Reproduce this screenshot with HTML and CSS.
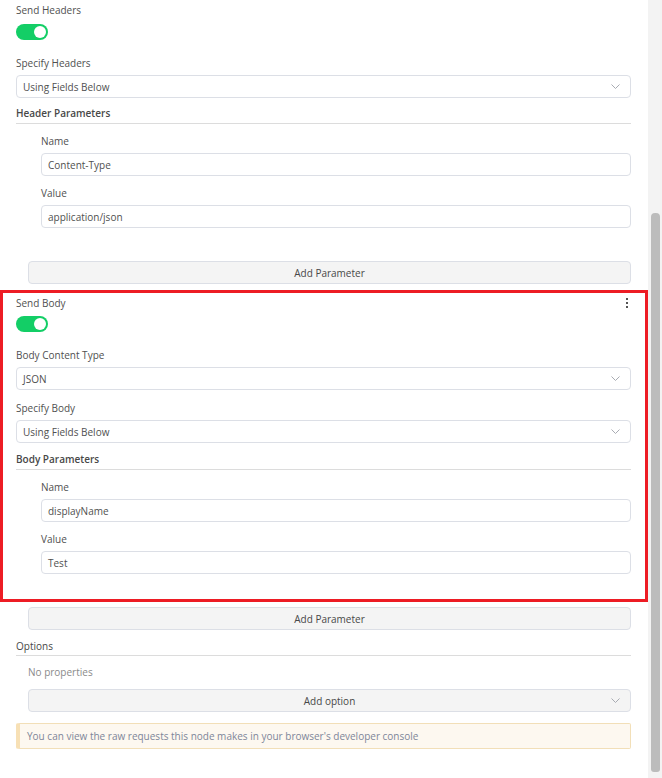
FILE: index.html
```html
<!DOCTYPE html>
<html lang="en">
<head>
  <meta charset="UTF-8">
  <meta name="viewport" content="width=device-width, initial-scale=1.0">
  <title>HTTP Request</title>
  <link rel="stylesheet" href="styles.css">
</head>
<body>
  <div class="window">
    <div class="panel">
      <div class="param param-switch">
        <div class="label">Send Headers</div>
        <div class="switch"><span class="knob"></span></div>
      </div>
      <div class="param">
        <div class="label">Specify Headers</div>
        <div class="select">
          <span>Using Fields Below</span>
          <svg class="chevron" width="9" height="6" viewBox="0 0 9 6"><polyline points="0.5,0.5 4.5,4.5 8.5,0.5" fill="none" stroke="#a8abb2" stroke-width="1"/></svg>
        </div>
      </div>
      <div class="collection">
        <div class="collection-title">Header Parameters</div>
        <div class="collection-items">
          <div class="param">
            <div class="label">Name</div>
            <div class="input">Content-Type</div>
          </div>
          <div class="param">
            <div class="label">Value</div>
            <div class="input">application/json</div>
          </div>
        </div>
      </div>
      <div class="add-button">Add Parameter</div>

      <div class="highlight">
        <div class="param param-switch">
          <div class="label-row">
            <div class="label">Send Body</div>
            <svg class="dots" width="4" height="10" viewBox="0 0 4 10"><rect x="1" y="0" width="2" height="2" fill="#555"/><rect x="1" y="4" width="2" height="2" fill="#555"/><rect x="1" y="8" width="2" height="2" fill="#555"/></svg>
          </div>
          <div class="switch"><span class="knob"></span></div>
        </div>
        <div class="param">
          <div class="label">Body Content Type</div>
          <div class="select">
            <span>JSON</span>
            <svg class="chevron" width="9" height="6" viewBox="0 0 9 6"><polyline points="0.5,0.5 4.5,4.5 8.5,0.5" fill="none" stroke="#a8abb2" stroke-width="1"/></svg>
          </div>
        </div>
        <div class="param">
          <div class="label">Specify Body</div>
          <div class="select">
            <span>Using Fields Below</span>
            <svg class="chevron" width="9" height="6" viewBox="0 0 9 6"><polyline points="0.5,0.5 4.5,4.5 8.5,0.5" fill="none" stroke="#a8abb2" stroke-width="1"/></svg>
          </div>
        </div>
        <div class="collection">
          <div class="collection-title">Body Parameters</div>
          <div class="collection-items">
            <div class="param">
              <div class="label">Name</div>
              <div class="input">displayName</div>
            </div>
            <div class="param">
              <div class="label">Value</div>
              <div class="input">Test</div>
            </div>
          </div>
        </div>
      </div>
      <div class="add-button add-after">Add Parameter</div>

      <div class="collection options">
        <div class="collection-title">Options</div>
        <div class="no-props">No properties</div>
        <div class="add-button add-option">
          <span>Add option</span>
          <svg class="chevron" width="9" height="6" viewBox="0 0 9 6"><polyline points="0.5,0.5 4.5,4.5 8.5,0.5" fill="none" stroke="#a8abb2" stroke-width="1"/></svg>
        </div>
      </div>

      <div class="notice">You can view the raw requests this node makes in your browser's developer console</div>
    </div>
    <div class="scrollbar"><div class="thumb"></div></div>
  </div>
</body>
</html>
```

FILE: styles.css
```css
body {
  margin: 0;
  padding: 0;
  background-color: #ffffff;
  font-family: "Open Sans", "Liberation Sans", Arial, sans-serif;
  font-size: 10px;
  color: #555555;
  overflow: hidden;
}

.window {
  display: flex;
  width: 662px;
  height: 778px;
  overflow: hidden;
}

.panel {
  width: 648px;
  box-sizing: border-box;
  padding: 3px 17px 0 16px;
}

.param {
  margin-bottom: 10px;
}

.param-switch {
  margin-bottom: 16px;
}

.label {
  line-height: 14px;
  margin-bottom: 5px;
  color: #505050;
}

.param-switch .label {
  margin-bottom: 7px;
}

.label-row {
  display: flex;
  justify-content: space-between;
  align-items: flex-start;
}

.dots {
  margin-top: 2px;
  margin-right: 2px;
}

.switch {
  width: 32px;
  height: 16px;
  border-radius: 8px;
  background-color: #13ce66;
  position: relative;
}

.knob {
  position: absolute;
  top: 2px;
  right: 2px;
  width: 12px;
  height: 12px;
  border-radius: 50%;
  background-color: #ffffff;
}

.select,
.input {
  height: 23px;
  box-sizing: border-box;
  border: 1px solid #dcdfe6;
  border-radius: 4px;
  background-color: #ffffff;
  padding: 0 10px 0 6px;
  display: flex;
  align-items: center;
  justify-content: space-between;
  color: #505050;
}

.collection-title {
  margin-top: -2px;
  line-height: 14px;
  padding-bottom: 3px;
  border-bottom: 1px solid #dcdcdc;
  font-weight: 600;
  color: #484848;
}

.collection-items {
  padding: 10px 0 0 25px;
}

.add-button {
  height: 23px;
  box-sizing: border-box;
  margin: 33px 0 6px 12px;
  border: 1px solid #dcdfe6;
  border-radius: 4px;
  background-color: #f4f4f4;
  display: flex;
  align-items: center;
  justify-content: center;
  color: #484848;
  position: relative;
}

.add-after {
  margin-top: 5px;
  margin-bottom: 9px;
}

.highlight {
  margin: 0 -17px 0 -16px;
  border: 3px solid #ed1c24;
  padding: 3px 14px 15px 13px;
}

.highlight > .param {
  margin-bottom: 11px;
}

.highlight > .param-switch {
  margin-bottom: 16px;
}

.highlight .param-switch .label {
  margin-bottom: 6px;
}

.options .collection-title {
  margin-top: 0;
  padding-bottom: 2px;
  font-weight: 400;
}

.no-props {
  line-height: 14px;
  margin: 9px 0 0 12px;
  color: #8a8a8a;
}

.add-option {
  margin: 10px 0 0 12px;
}

.add-option .chevron {
  position: absolute;
  right: 10px;
  top: 8px;
}

.notice {
  margin-top: 11px;
  height: 26px;
  box-sizing: border-box;
  border: 1px solid #f2dfb8;
  border-left: 4px solid #f7e0b5;
  border-radius: 2px;
  background-color: #fdf8f0;
  padding-left: 7px;
  display: flex;
  align-items: center;
  color: #7d8699;
}

.scrollbar {
  width: 14px;
  background-color: #f3f3f3;
  padding-top: 213px;
  box-sizing: border-box;
}

.thumb {
  width: 9px;
  height: 559px;
  margin-left: 3px;
  border-radius: 4px 4px 3px 3px;
  background-color: #bcbcbc;
}
```
